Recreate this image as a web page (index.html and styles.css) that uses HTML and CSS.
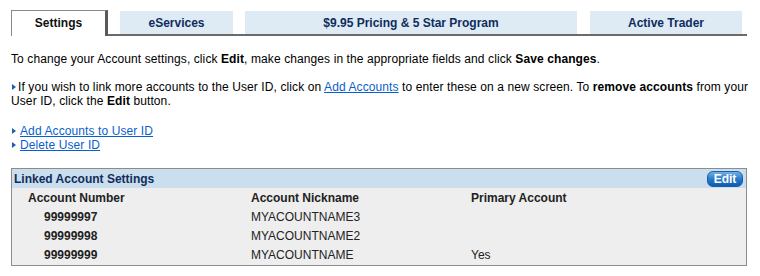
FILE: index.html
```html
<!DOCTYPE html>
<html lang="en">
<head>
<meta charset="UTF-8">
<title>Account Settings</title>
<link rel="stylesheet" href="styles.css">
</head>
<body>

<div class="page">
  <div class="tabs">
    <div class="tab active">Settings</div>
    <div class="tab-rest">
      <div class="tab tab-eservices">eServices</div>
      <div class="tab tab-pricing">$9.95 Pricing &amp; 5 Star Program</div>
      <div class="tab tab-trader">Active Trader</div>
    </div>
  </div>

  <p class="intro">To change your Account settings, click <b>Edit</b>, make changes in the appropriate fields and click <b>Save changes</b>.</p>

  <p class="note"><span class="arrow"></span>If you wish to link more accounts to the User ID, click on <a href="#">Add Accounts</a> to enter these on a new screen. To <b>remove accounts</b> from your User ID, click the <b>Edit</b> button.</p>

  <ul class="links">
    <li><span class="arrow"></span><a href="#">Add Accounts to User ID</a></li>
    <li><span class="arrow"></span><a href="#">Delete User ID</a></li>
  </ul>

  <div class="panel">
    <div class="panel-header">
      <span class="panel-title">Linked Account Settings</span>
      <button class="edit-button">Edit</button>
    </div>
    <div class="accounts">
      <div class="row head">
        <div>Account Number</div>
        <div>Account Nickname</div>
        <div>Primary Account</div>
      </div>
      <div class="row">
        <div class="number">99999997</div>
        <div>MYACOUNTNAME3</div>
        <div></div>
      </div>
      <div class="row">
        <div class="number">99999998</div>
        <div>MYACOUNTNAME2</div>
        <div></div>
      </div>
      <div class="row">
        <div class="number">99999999</div>
        <div>MYACOUNTNAME</div>
        <div>Yes</div>
      </div>
    </div>
  </div>
</div>

</body>
</html>
```

FILE: styles.css
```css
body {
  margin: 0;
  padding: 0;
  background-color: #fff;
  font-family: "Liberation Sans", Arial, sans-serif;
  font-size: 12px;
  line-height: 14px;
  letter-spacing: 0.1px;
  color: #000;
}
.page {
  width: 736px;
  padding: 10px 0 0 11px;
}
.tabs {
  display: flex;
  height: 26px;
}
.tab {
  font-weight: bold;
  text-align: center;
  line-height: 24px;
  letter-spacing: 0;
  color: #0f2d5c;
}
.tab.active {
  width: 97px;
  height: 26px;
  line-height: 25px;
  color: #111;
  background-color: #fff;
  border-top: 1px solid #8a8a8a;
  border-left: 1px solid #8a8a8a;
  border-right: 3px solid #5a5a5a;
  box-sizing: border-box;
}
.tab-rest {
  flex: 1;
  display: flex;
  gap: 12px;
  padding: 1px 5px 0 12px;
  height: 23px;
  border-bottom: 2px solid #6b6b6b;
}
.tab-rest .tab {
  height: 23px;
  background-color: #deebf5;
}
.tab-eservices {
  width: 113px;
}
.tab-pricing {
  width: 332px;
}
.tab-trader {
  width: 152px;
  margin-left: 1px;
}
p {
  margin: 0;
}
.intro {
  margin-top: 16px;
}
.note {
  margin-top: 14px;
  width: 740px;
}
.arrow {
  display: inline-block;
  width: 0;
  height: 0;
  border-top: 3px solid transparent;
  border-bottom: 3px solid transparent;
  border-left: 4px solid #1c5fb3;
  margin: 0 2px 1px 1px;
}
a {
  color: #0a5fcc;
  text-decoration: underline;
}
.links {
  list-style: none;
  margin: 16px 0 0 0;
  padding: 0;
}
.links .arrow {
  margin-right: 4px;
}
.panel {
  margin-top: 16px;
  border: 1px solid #8c8c8c;
  background-color: #eeeeee;
}
.panel-header {
  display: flex;
  align-items: center;
  justify-content: space-between;
  height: 19px;
  padding: 0 3px 0 2px;
  background-color: #cbdeed;
}
.panel-title {
  font-weight: bold;
  letter-spacing: 0;
  color: #0f2d5c;
}
.edit-button {
  width: 36px;
  height: 16px;
  padding: 0;
  border: 1px solid #1a5ea8;
  border-radius: 6px;
  background: linear-gradient(#74b0e4, #2a7acb 50%, #0d5cad);
  color: #fff;
  font-family: "Liberation Sans", Arial, sans-serif;
  font-size: 12px;
  font-weight: bold;
  line-height: 14px;
  cursor: pointer;
}
.accounts {
  padding: 1px 0 0 16px;
  color: #222;
}
.row {
  display: grid;
  grid-template-columns: 223px 220px 1fr;
  height: 19px;
  line-height: 19px;
  letter-spacing: 0;
}
.row.head {
  font-weight: bold;
}
.number {
  font-weight: bold;
  padding-left: 16px;
}
```
